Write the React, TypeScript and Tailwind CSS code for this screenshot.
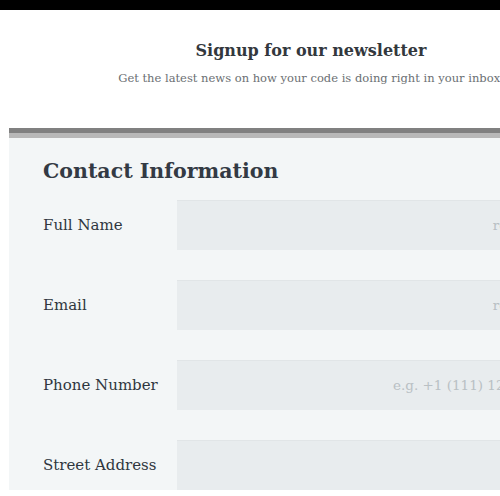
import React from "react";

const font = { fontFamily: '"DejaVu Serif", "Liberation Serif", serif' };

function Row({ label, placeholder }: { label: string; placeholder: string }) {
  return (
    <div className="flex items-center h-[50px] mb-[30px]">
      <div className="w-[134px] pl-[34px] shrink-0 text-[15px] text-[#2f363e] box-content">{label}</div>
      <div className="flex-1 h-[50px] bg-[#e8ecee] border-t border-[#e1e5e7] flex items-center justify-end pr-[70px]">
        <span className="text-[13.5px] text-[#b9c0c4] whitespace-nowrap">{placeholder}</span>
      </div>
    </div>
  );
}

export default function App() {
  return (
    <div className="w-[500px] h-[496px] overflow-hidden bg-white" style={font}>
      <div className="h-[10px] bg-black" />
      <div className="w-[622px]">
        <div className="flex flex-col items-center pt-[29px] h-[118px]">
          <h1 className="text-[16px] font-bold text-[#33383d] leading-[24px] whitespace-nowrap">Signup for our newsletter</h1>
          <p className="text-[11.5px] text-[#6b6f73] leading-[18px] mt-[6px] whitespace-nowrap">Get the latest news on how your code is doing right in your inbox.</p>
        </div>
        <div className="ml-[9px] border-t-[5px] border-[#808080]">
          <div className="border-t-[5px] border-[#b8b8b8] bg-[#f3f6f7] pt-[17px]">
            <h2 className="pl-[34px] text-[20.5px] font-bold text-[#333a44] leading-[32px] mb-[13px]">Contact Information</h2>
            <Row label="Full Name" placeholder="required" />
            <Row label="Email" placeholder="required" />
            <Row label="Phone Number" placeholder="e.g. +1 (111) 123-4567" />
            <Row label="Street Address" placeholder="" />
          </div>
        </div>
      </div>
    </div>
  );
}
